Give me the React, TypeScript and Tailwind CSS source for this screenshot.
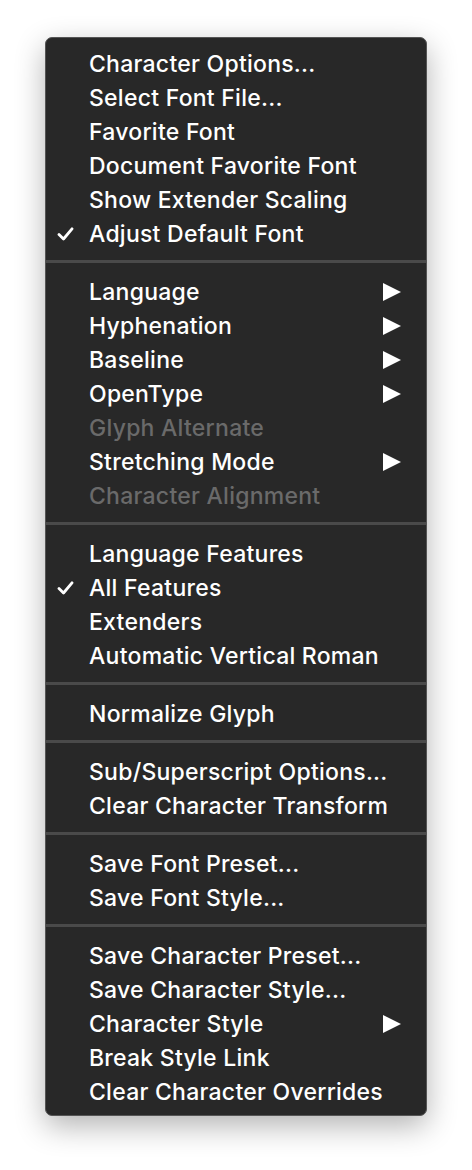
import React from 'react';

type Item = { label: string; checked?: boolean; submenu?: boolean; disabled?: boolean };

const sections: Item[][] = [
  [
    { label: 'Character Options...' },
    { label: 'Select Font File...' },
    { label: 'Favorite Font' },
    { label: 'Document Favorite Font' },
    { label: 'Show Extender Scaling' },
    { label: 'Adjust Default Font', checked: true },
  ],
  [
    { label: 'Language', submenu: true },
    { label: 'Hyphenation', submenu: true },
    { label: 'Baseline', submenu: true },
    { label: 'OpenType', submenu: true },
    { label: 'Glyph Alternate', disabled: true },
    { label: 'Stretching Mode', submenu: true },
    { label: 'Character Alignment', disabled: true },
  ],
  [
    { label: 'Language Features' },
    { label: 'All Features', checked: true },
    { label: 'Extenders' },
    { label: 'Automatic Vertical Roman' },
  ],
  [{ label: 'Normalize Glyph' }],
  [
    { label: 'Sub/Superscript Options...' },
    { label: 'Clear Character Transform' },
  ],
  [
    { label: 'Save Font Preset...' },
    { label: 'Save Font Style...' },
  ],
  [
    { label: 'Save Character Preset...' },
    { label: 'Save Character Style...' },
    { label: 'Character Style', submenu: true },
    { label: 'Break Style Link' },
    { label: 'Clear Character Overrides' },
  ],
];

function Check() {
  return (
    <svg width="17" height="14" viewBox="0 0 17 14" className="block">
      <path d="M2 7.5 L6.5 12 L15 1.8" fill="none" stroke="white" strokeWidth="2.8" strokeLinecap="round" strokeLinejoin="round" />
    </svg>
  );
}

function Arrow() {
  return (
    <svg width="18" height="18" viewBox="0 0 18 18" className="block">
      <path d="M0 0 L18 9 L0 18 Z" fill="white" />
    </svg>
  );
}

function Row({ item }: { item: Item }) {
  return (
    <div className="flex items-center h-[34px] pr-[25px]">
      <div className="w-[43px] flex justify-end pr-[15px]">{item.checked && <Check />}</div>
      <span className={`flex-1 ${item.disabled ? 'text-[#6a6a6a]' : 'text-white'}`}>{item.label}</span>
      {item.submenu && <Arrow />}
    </div>
  );
}

export default function App() {
  return (
    <div className="min-h-[1170px] bg-white pt-[37px] pl-[45px]">
      <div
        className="w-[382px] h-[1079px] rounded-[7px] bg-[#282828] border border-[#555555] shadow-[0_10px_30px_rgba(0,0,0,0.3)] pt-[9px] text-[23px] font-medium tracking-[0.25px] antialiased"
        style={{ fontFamily: 'Inter, "Noto Sans", sans-serif' }}
      >
        {sections.map((sec, i) => (
          <div key={i}>
            {i > 0 && <div className="h-[3px] bg-[#4a4a4a] mt-[9px] mb-[12px]" />}
            {sec.map((it) => (
              <Row key={it.label} item={it} />
            ))}
          </div>
        ))}
      </div>
    </div>
  );
}
